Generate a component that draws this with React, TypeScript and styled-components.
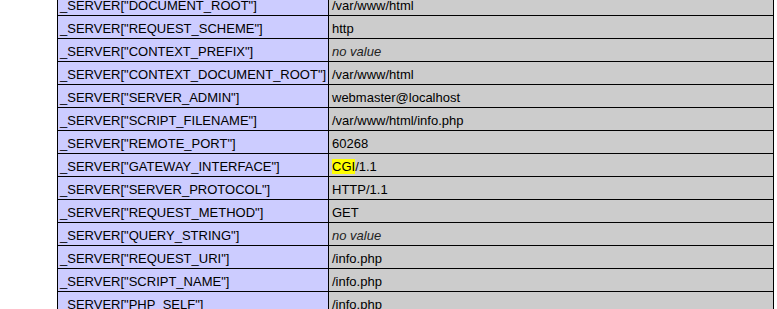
import React from "react";
import styled, { createGlobalStyle } from "styled-components";

const Global = createGlobalStyle`
  html, body { margin: 0; padding: 0; background: #fff; }
  body { font-family: "Liberation Sans", Arial, sans-serif; color: #000; overflow: hidden; }
`;

const Page = styled.div`
  width: 777px;
  height: 309px;
  overflow: hidden;
`;

const Table = styled.table`
  border-collapse: collapse;
  table-layout: fixed;
  width: 717px;
  margin-left: 57px;
  margin-top: -8px;
`;

const Cell = styled.td<{ $kind: "e" | "v" }>`
  border: 1px solid #000;
  font-size: 13px;
  line-height: 15px;
  height: 15px;
  padding: 5px ${(p) => (p.$kind === "e" ? "2px" : "3px")} 2px;
  vertical-align: baseline;
  white-space: nowrap;
  overflow: hidden;
  color: #000;
  background: ${(p) => (p.$kind === "e" ? "#ccccff" : "#cccccc")};
  width: ${(p) => (p.$kind === "e" ? "266px" : "auto")};
`;

const NoValue = styled.i`
  color: #222;
`;

const Mark = styled.span`
  background: #ffff00;
`;

type Row = { key: string; value: React.ReactNode };

const rows: Row[] = [
  { key: "DOCUMENT_ROOT", value: "/var/www/html" },
  { key: "REQUEST_SCHEME", value: "http" },
  { key: "CONTEXT_PREFIX", value: <NoValue>no value</NoValue> },
  { key: "CONTEXT_DOCUMENT_ROOT", value: "/var/www/html" },
  { key: "SERVER_ADMIN", value: "webmaster@localhost" },
  { key: "SCRIPT_FILENAME", value: "/var/www/html/info.php" },
  { key: "REMOTE_PORT", value: "60268" },
  {
    key: "GATEWAY_INTERFACE",
    value: (
      <>
        <Mark>CGI</Mark>/1.1
      </>
    ),
  },
  { key: "SERVER_PROTOCOL", value: "HTTP/1.1" },
  { key: "REQUEST_METHOD", value: "GET" },
  { key: "QUERY_STRING", value: <NoValue>no value</NoValue> },
  { key: "REQUEST_URI", value: "/info.php" },
  { key: "SCRIPT_NAME", value: "/info.php" },
  { key: "PHP_SELF", value: "/info.php" },
];

export default function App() {
  return (
    <Page>
      <Global />
      <Table>
        <tbody>
          {rows.map((r) => (
            <tr key={r.key}>
              <Cell $kind="e">_SERVER["{r.key}"]</Cell>
              <Cell $kind="v">{r.value}</Cell>
            </tr>
          ))}
        </tbody>
      </Table>
    </Page>
  );
}
